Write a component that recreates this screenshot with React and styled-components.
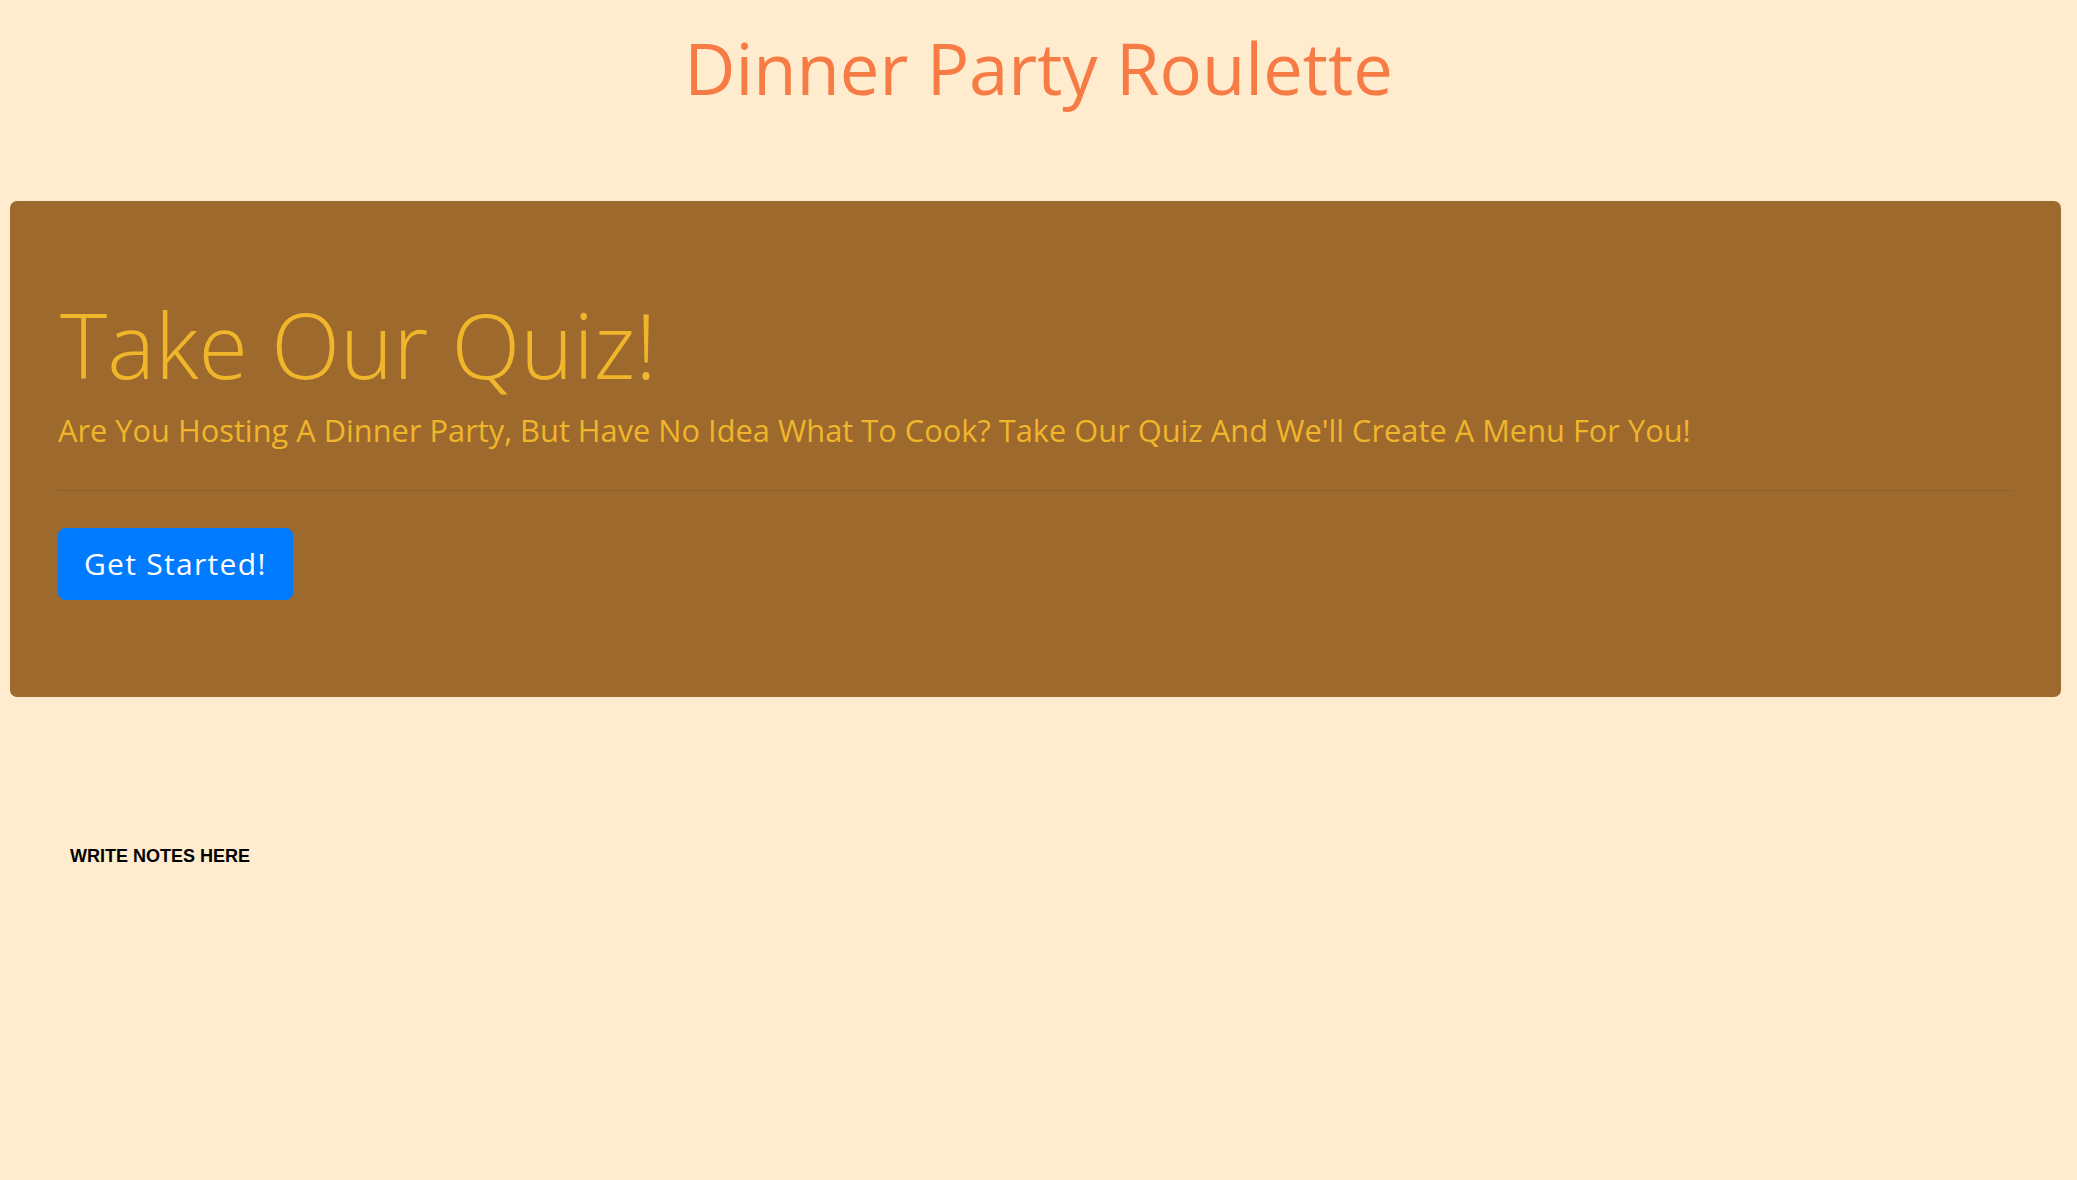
import React from 'react'
import styled, {createGlobalStyle} from 'styled-components'

const GlobalStyle = createGlobalStyle`
  html, body {
    margin: 0;
    padding: 0;
    background: #ffebcd;
  }
  body {
    font-family: "Open Sans", "Noto Sans", sans-serif;
    min-height: 1180px;
  }
`

const Page = styled.div`
  display: flex;
  flex-direction: column;
`

const SiteTitle = styled.h1`
  margin: 0;
  padding-top: 26px;
  text-align: center;
  font-family: "Open Sans", sans-serif;
  font-weight: 400;
  font-size: 70.6px;
  line-height: 1.2;
  color: #f67b45;
`

const Jumbotron = styled.section`
  margin: 90px 16px 0 10px;
  padding: 89px 48px 97px;
  background: #9e692c;
  border-radius: 7px;
  display: flex;
  flex-direction: column;
  align-items: flex-start;
`

const Display = styled.h2`
  margin: 0 0 9px 2px;
  font-family: "Open Sans", sans-serif;
  font-weight: 300;
  font-size: 90px;
  line-height: 1.2;
  color: #f0b62b;
`

const Lead = styled.p`
  margin: 0;
  font-family: "Open Sans", sans-serif;
  font-size: 30.8px;
  line-height: 1.5;
  color: #f0b62b;
`

const Rule = styled.hr`
  align-self: stretch;
  margin: 37px 0;
  border: 0;
  border-top: 1px solid rgba(0, 0, 0, 0.1);
`

const Button = styled.button`
  box-sizing: border-box;
  height: 72px;
  padding: 0 25px;
  border: 1px solid #007bff;
  border-radius: 7px;
  background: #007bff;
  color: #fff;
  font-family: "Open Sans", sans-serif;
  font-size: 30px;
  line-height: 1.5;
  letter-spacing: 1.3px;
  cursor: pointer;
`

const Notes = styled.div`
  margin-top: 150px;
  padding-left: 70px;
  font-family: "Liberation Sans", Arial, sans-serif;
  font-weight: 700;
  font-size: 18px;
  line-height: 1;
  color: #000;
`

const App = () => {
  return (
    <Page>
      <GlobalStyle />
      <SiteTitle>Dinner Party Roulette</SiteTitle>
      <Jumbotron>
        <Display>Take Our Quiz!</Display>
        <Lead>
          Are You Hosting A Dinner Party, But Have No Idea What To Cook? Take Our Quiz And We'll Create A Menu For You!
        </Lead>
        <Rule />
        <Button>Get Started!</Button>
      </Jumbotron>
      <Notes>WRITE NOTES HERE</Notes>
    </Page>
  )
}

export default App
